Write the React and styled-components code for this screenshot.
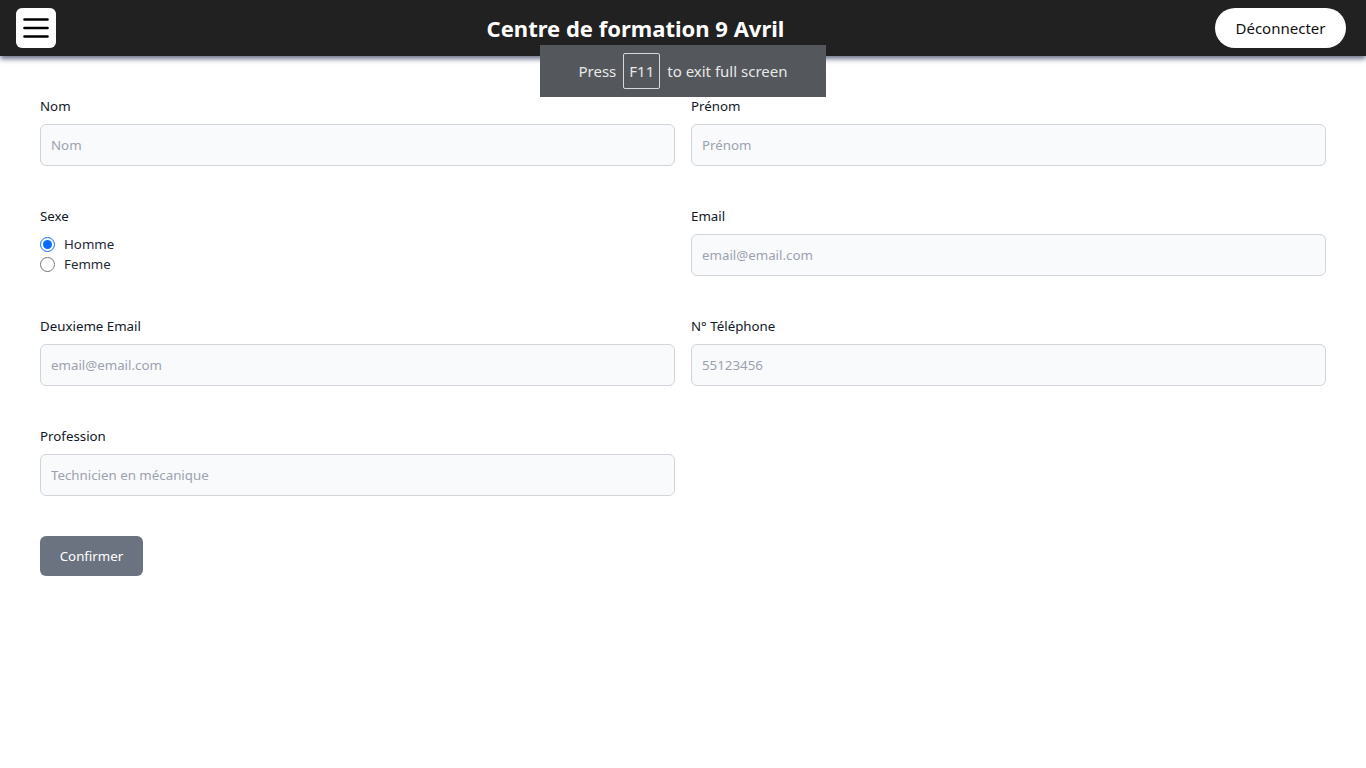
import React, { useState } from 'react';
import styled, { createGlobalStyle } from 'styled-components';

const GlobalStyle = createGlobalStyle`
  * { box-sizing: border-box; }
  body {
    margin: 0;
    background: #fff;
    font-family: 'Noto Sans', 'Open Sans', sans-serif;
    color: #111827;
  }
`;

export default function App() {
  const [sexe, setSexe] = useState('homme');

  return (
    <Page>
      <GlobalStyle />
      <Header>
        <MenuButton aria-label="menu">
          <svg width="26" height="22" viewBox="0 0 26 22">
            <path d="M1.5 2.5h23M1.5 11h23M1.5 19.5h23" stroke="#000" strokeWidth="2.6" strokeLinecap="round" />
          </svg>
        </MenuButton>
        <Title>Centre de formation 9 Avril</Title>
        <LogoutButton>Déconnecter</LogoutButton>
      </Header>

      <FullscreenHint>
        Press <Key>F11</Key> to exit full screen
      </FullscreenHint>

      <Form onSubmit={(e) => e.preventDefault()}>
        <Grid>
          <Field>
            <Label>Nom</Label>
            <Input placeholder="Nom" />
          </Field>
          <Field>
            <Label>Prénom</Label>
            <Input placeholder="Prénom" />
          </Field>
          <Field>
            <Label>Sexe</Label>
            <RadioGroup>
              <RadioLine>
                <Radio type="radio" name="sexe" checked={sexe === 'homme'} onChange={() => setSexe('homme')} />
                Homme
              </RadioLine>
              <RadioLine>
                <Radio type="radio" name="sexe" checked={sexe === 'femme'} onChange={() => setSexe('femme')} />
                Femme
              </RadioLine>
            </RadioGroup>
          </Field>
          <Field>
            <Label>Email</Label>
            <Input placeholder="email@email.com" />
          </Field>
          <Field>
            <Label>Deuxieme Email</Label>
            <Input placeholder="email@email.com" />
          </Field>
          <Field>
            <Label>N° Téléphone</Label>
            <Input placeholder="55123456" />
          </Field>
          <Field>
            <Label>Profession</Label>
            <Input placeholder="Technicien en mécanique" />
          </Field>
        </Grid>
        <SubmitButton type="submit">Confirmer</SubmitButton>
      </Form>
    </Page>
  );
}

const Page = styled.div`
  position: relative;
  min-height: 100vh;
`;

const Header = styled.header`
  height: 56px;
  background: #212121;
  display: flex;
  align-items: center;
  justify-content: space-between;
  padding: 0 20px 0 16px;
  box-shadow: 0 3px 5px rgba(60, 70, 100, 0.75);
  position: relative;
  z-index: 1;
`;

const MenuButton = styled.button`
  width: 40px;
  height: 40px;
  border: none;
  border-radius: 6px;
  background: #fff;
  display: flex;
  align-items: center;
  justify-content: center;
  padding: 0;
  cursor: pointer;
`;

const Title = styled.h1`
  margin: 0;
  color: #fff;
  font-size: 22px;
  font-weight: 700;
`;

const LogoutButton = styled.button`
  height: 40px;
  width: 131px;
  padding: 0;
  border: none;
  border-radius: 20px;
  background: #fff;
  color: #111;
  font-family: inherit;
  font-size: 15px;
  cursor: pointer;
`;

const FullscreenHint = styled.div`
  position: absolute;
  top: 45px;
  left: 540px;
  width: 286px;
  height: 52px;
  background: #54575c;
  color: #e8e8e8;
  font-size: 15px;
  display: flex;
  align-items: center;
  justify-content: center;
  gap: 7px;
  z-index: 2;
`;

const Key = styled.span`
  display: inline-flex;
  align-items: center;
  justify-content: center;
  height: 36px;
  padding: 0 5px;
  border: 1px solid #d8d8d8;
  border-radius: 2px;
`;

const Form = styled.form`
  padding: 40px 40px;
`;

const Grid = styled.div`
  display: grid;
  grid-template-columns: 1fr 1fr;
  column-gap: 16px;
  row-gap: 40px;
`;

const Field = styled.div`
  display: flex;
  flex-direction: column;
`;

const Label = styled.label`
  font-size: 13.3px;
  line-height: 20px;
  color: #111827;
  margin-bottom: 8px;
`;

const Input = styled.input`
  height: 42px;
  border: 1px solid #d1d5db;
  border-radius: 6px;
  background: #f9fafb;
  padding: 0 10px;
  font-family: inherit;
  font-size: 13.3px;
  color: #111827;

  &::placeholder {
    color: #9ca3af;
  }

  &:focus {
    outline: none;
    border-color: #3b82f6;
  }
`;

const RadioGroup = styled.div`
  display: flex;
  flex-direction: column;
`;

const RadioLine = styled.label`
  display: flex;
  align-items: center;
  gap: 9px;
  font-size: 13.3px;
  line-height: 20px;
  color: #1f2937;
`;

const Radio = styled.input`
  width: 15px;
  height: 15px;
  margin: 0;
  accent-color: #0a6cff;
`;

const SubmitButton = styled.button`
  margin-top: 40px;
  height: 40px;
  width: 103px;
  padding: 0;
  border: none;
  border-radius: 6px;
  background: #6b7280;
  color: #fff;
  font-family: inherit;
  font-size: 13.3px;
  cursor: pointer;
`;
